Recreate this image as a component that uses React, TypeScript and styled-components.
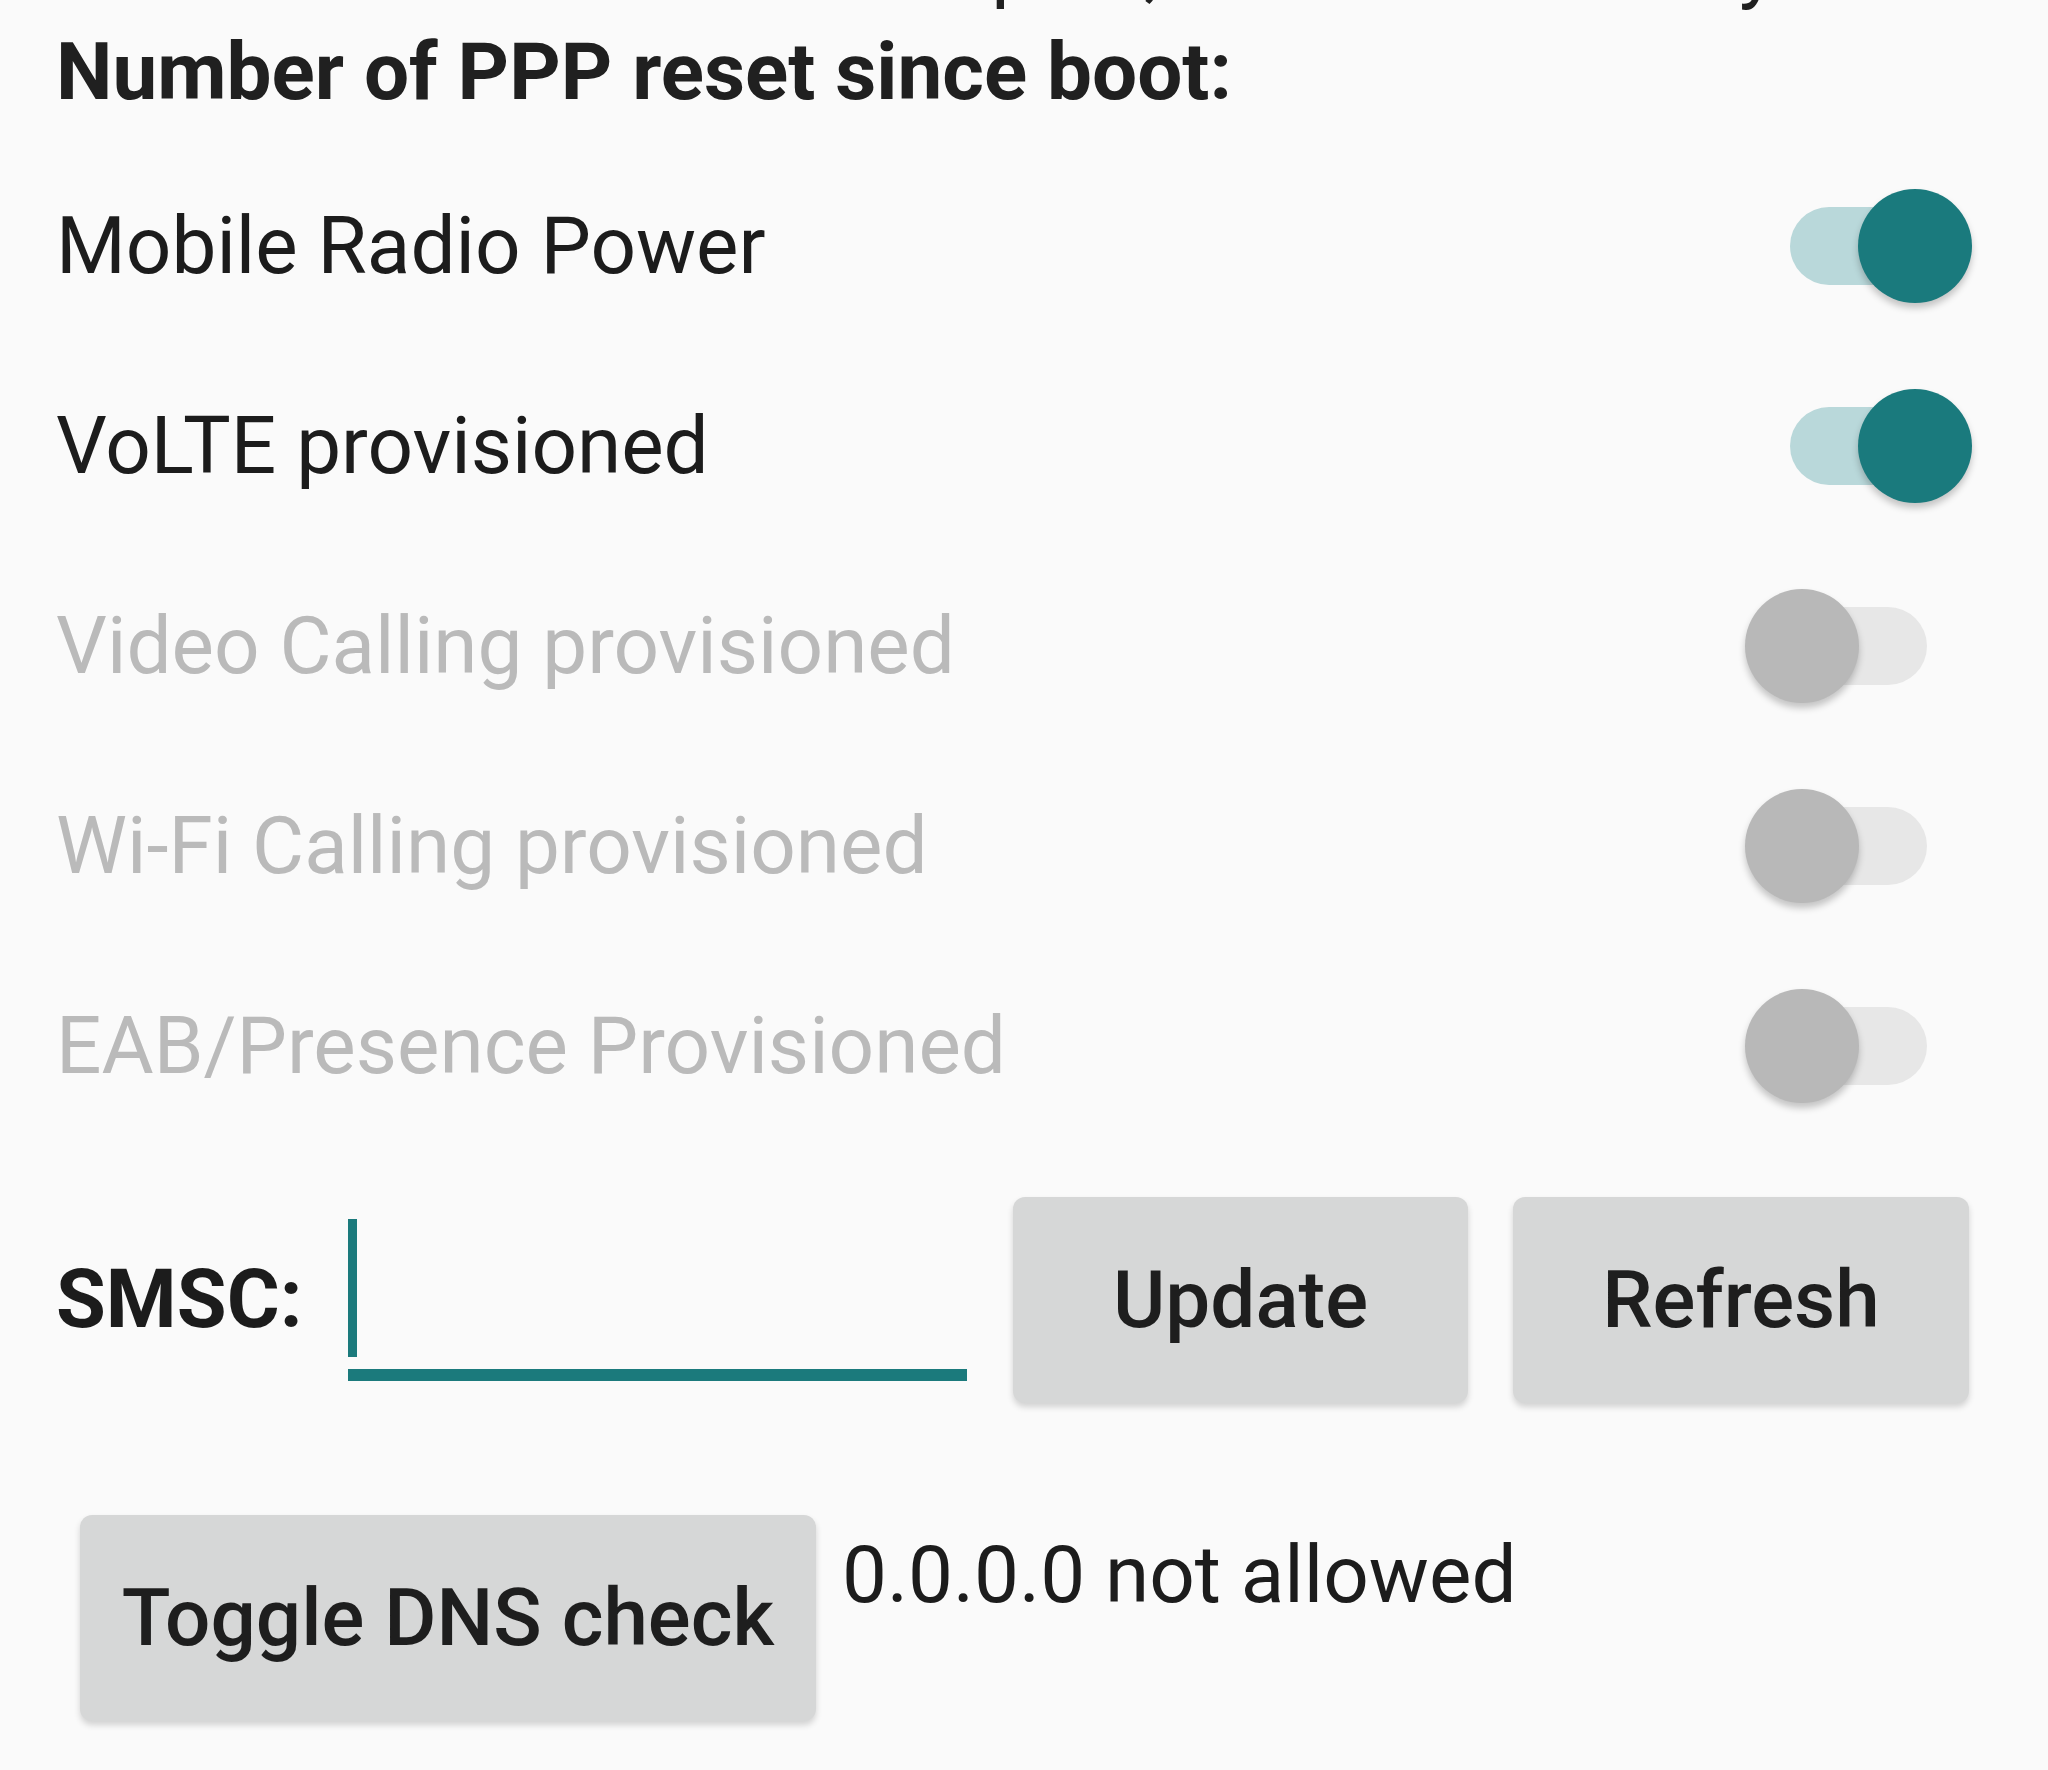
import styled, { createGlobalStyle } from 'styled-components';

const GlobalStyle = createGlobalStyle`
  html, body {
    margin: 0;
    padding: 0;
    background: #fafafa;
  }
  body {
    font-family: Roboto, "Liberation Sans", sans-serif;
    color: #202020;
  }
`;

const Page = styled.div`
  width: 2048px;
  height: 1770px;
  overflow: hidden;
  background: #fafafa;
  padding: 0 76px 0 56px;
  box-sizing: border-box;
`;

// the line above is scrolled off, only its descenders are left
const Clip = styled.div`
  height: 24px;
  overflow: hidden;
`;

const InfoLine = styled.div<{ $offset?: number }>`
  margin-top: ${(p) => p.$offset ?? 0}px;
  font-size: 80px;
  line-height: 96px;
  white-space: nowrap;
`;

const Label = styled.span`
  font-weight: 700;
`;

const Heading = styled.div`
  font-size: 80px;
  line-height: 96px;
  font-weight: 700;
  white-space: nowrap;
`;

const List = styled.div`
  margin-top: 26px;
  display: flex;
  flex-direction: column;
`;

const Row = styled.div`
  height: 200px;
  display: flex;
  align-items: center;
  justify-content: space-between;
`;

const RowText = styled.span<{ $disabled?: boolean }>`
  font-size: 80px;
  line-height: 96px;
  color: ${(p) => (p.$disabled ? '#bababa' : '#1c1c1c')};
`;

const Switch = styled.div`
  position: relative;
  width: 227px;
  height: 114px;
  flex: none;
`;

const Track = styled.div<{ $on: boolean }>`
  position: absolute;
  left: 45px;
  top: 18px;
  width: 137px;
  height: 78px;
  border-radius: 39px;
  background: ${(p) => (p.$on ? '#b9d8da' : '#e7e7e7')};
`;

const Thumb = styled.div<{ $on: boolean }>`
  position: absolute;
  top: 0;
  left: ${(p) => (p.$on ? 113 : 0)}px;
  width: 114px;
  height: 114px;
  border-radius: 50%;
  background: ${(p) => (p.$on ? '#1a7a7d' : '#b8b8b8')};
  box-shadow: 0 5px 7px rgba(0, 0, 0, 0.22);
`;

const SmscRow = styled.div`
  margin-top: 51px;
  margin-right: -3px;
  height: 206px;
  display: flex;
  align-items: center;
`;

const SmscLabel = styled.span`
  font-size: 81px;
  line-height: 96px;
  font-weight: 700;
  color: #1c1c1c;
  width: 292px;
  flex: none;
`;

const Field = styled.div`
  width: 619px;
  height: 138px;
  padding-bottom: 12px;
  border-bottom: 12px solid #1b7a7c;
  flex: none;
`;

const Caret = styled.div`
  width: 9px;
  height: 138px;
  background: #1b7a7c;
`;

const GreyButton = styled.button<{ $width: number }>`
  width: ${(p) => p.$width}px;
  height: 206px;
  flex: none;
  border: none;
  border-radius: 12px;
  background: #d6d7d7;
  box-shadow: 0 4px 6px rgba(0, 0, 0, 0.16);
  font-family: Roboto, "Liberation Sans", sans-serif;
  font-size: 80px;
  font-weight: 500;
  color: #1e1e1e;
  padding: 0;
  cursor: pointer;
`;

const ButtonGroup = styled.div`
  margin-left: 46px;
  display: flex;
  gap: 45px;
`;

const DnsRow = styled.div`
  margin-top: 112px;
  margin-left: 24px;
  display: flex;
  align-items: flex-start;
  gap: 26px;
`;

const DnsStatus = styled.span`
  margin-top: 12px;
  font-size: 80px;
  line-height: 96px;
  color: #1c1c1c;
  white-space: nowrap;
`;

const toggles = [
  { label: 'Mobile Radio Power', on: true, disabled: false },
  { label: 'VoLTE provisioned', on: true, disabled: false },
  { label: 'Video Calling provisioned', on: false, disabled: true },
  { label: 'Wi-Fi Calling provisioned', on: false, disabled: true },
  { label: 'EAB/Presence Provisioned', on: false, disabled: true },
];

export default function App() {
  return (
    <Page>
      <GlobalStyle />
      <Clip>
        <InfoLine $offset={-82}>
          <Label>Data Received:</Label> 38412907 pkts, 22095318824 bytes
        </InfoLine>
      </Clip>
      <Heading>Number of PPP reset since boot:</Heading>

      <List>
        {toggles.map((t) => (
          <Row key={t.label}>
            <RowText $disabled={t.disabled}>{t.label}</RowText>
            <Switch>
              <Track $on={t.on} />
              <Thumb $on={t.on} />
            </Switch>
          </Row>
        ))}
      </List>

      <SmscRow>
        <SmscLabel>SMSC:</SmscLabel>
        <Field>
          <Caret />
        </Field>
        <ButtonGroup>
          <GreyButton $width={455}>Update</GreyButton>
          <GreyButton $width={456}>Refresh</GreyButton>
        </ButtonGroup>
      </SmscRow>

      <DnsRow>
        <GreyButton $width={736}>Toggle DNS check</GreyButton>
        <DnsStatus>0.0.0.0 not allowed</DnsStatus>
      </DnsRow>
    </Page>
  );
}
